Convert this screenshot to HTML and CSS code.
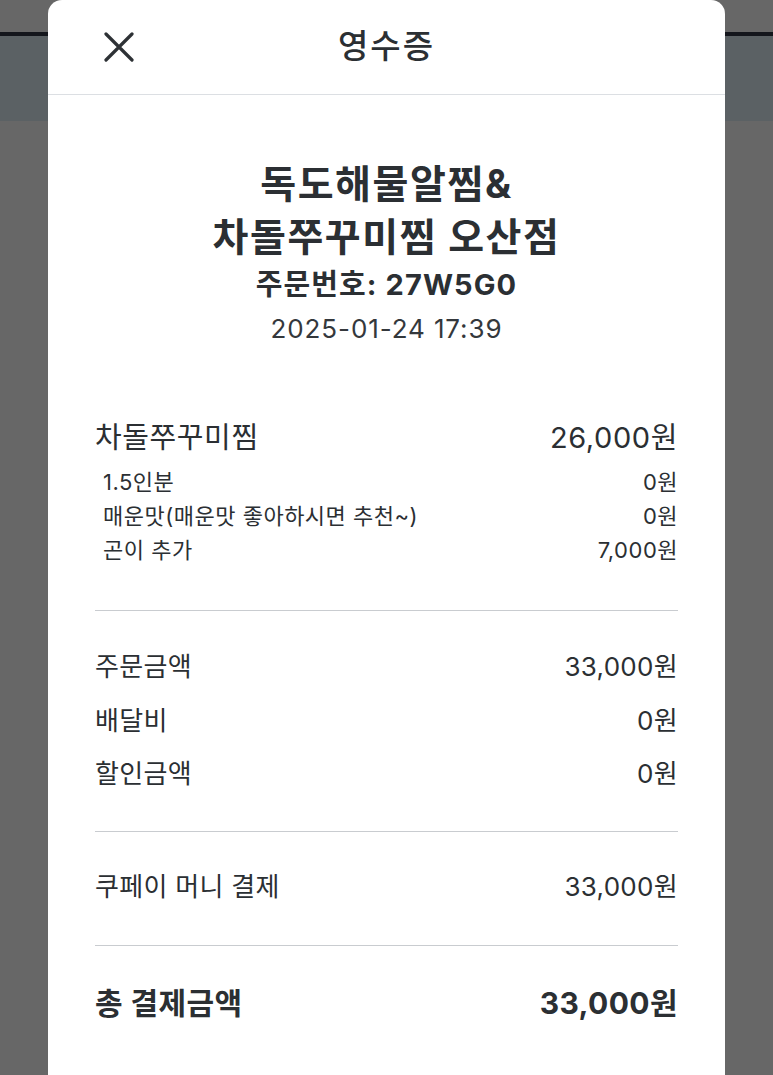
FILE: index.html
```html
<!DOCTYPE html>
<html lang="ko">
<head>
<meta charset="utf-8">
<link rel="stylesheet" href="styles.css">
</head>
<body>
<div class="page">
  <div class="topbar"></div>
  <div class="band"></div>
</div>
<div class="overlay">
  <div class="modal">
    <header class="modal-head">
      <button class="close" aria-label="닫기">
        <svg width="30" height="30" viewBox="0 0 30 30"><path d="M2 2 L28 28 M28 2 L2 28" stroke="#2d3135" stroke-width="3.2" stroke-linecap="round" fill="none"/></svg>
      </button>
      <h1 class="modal-title">영수증</h1>
    </header>
    <div class="modal-body">
      <section class="store">
        <h2 class="store-name">독도해물알찜&amp;<br>차돌쭈꾸미찜 오산점</h2>
        <p class="order-no">주문번호: 27W5G0</p>
        <p class="order-date">2025-01-24 17:39</p>
      </section>
      <section class="items">
        <div class="row row-main"><span>차돌쭈꾸미찜</span><span>26,000원</span></div>
        <div class="row row-sub"><span>1.5인분</span><span>0원</span></div>
        <div class="row row-sub"><span>매운맛(매운맛 좋아하시면 추천~)</span><span>0원</span></div>
        <div class="row row-sub"><span>곤이 추가</span><span>7,000원</span></div>
      </section>
      <section class="block sums">
        <div class="row row-std"><span>주문금액</span><span>33,000원</span></div>
        <div class="row row-std"><span>배달비</span><span>0원</span></div>
        <div class="row row-std"><span>할인금액</span><span>0원</span></div>
      </section>
      <section class="block pay">
        <div class="row row-std"><span>쿠페이 머니 결제</span><span>33,000원</span></div>
      </section>
      <section class="block total">
        <div class="row row-total"><span>총 결제금액</span><span>33,000원</span></div>
      </section>
    </div>
  </div>
</div>
</body>
</html>
```
FILE: styles.css
```css
* { box-sizing: border-box; }
html, body { margin: 0; padding: 0; }
body {
  width: 773px;
  height: 1075px;
  overflow: hidden;
  background: #676767;
  font-family: "Inter", "Noto Sans CJK KR", sans-serif;
  color: #2b2f33;
  position: relative;
}
.topbar {
  height: 36px;
  background: #676767;
  border-bottom: 4px solid #14161c;
}
.band {
  height: 85px;
  background: #5b6164;
}
.overlay {
  position: absolute;
  left: 48px;
  top: 0;
  width: 677px;
  height: 1075px;
}
.modal {
  background: #fff;
  border-radius: 14px 14px 0 0;
  height: 100%;
  display: flex;
  flex-direction: column;
}
.modal-head {
  height: 95px;
  border-bottom: 1.5px solid #dcdfe3;
  display: flex;
  align-items: center;
  justify-content: center;
  position: relative;
}
.close {
  position: absolute;
  left: 56px;
  top: 32px;
  padding: 0;
  border: 0;
  background: none;
  width: 30px;
  height: 30px;
}
.close svg { display: block; }
.modal-title {
  margin: 0;
  font-size: 33px;
  font-weight: 500;
  line-height: 1;
  letter-spacing: 2px;
  color: #2b2f33;
  transform: translateY(-1px);
}
.modal-body {
  padding: 0 47px 0 47px;
}
.store {
  text-align: center;
  padding-top: 62px;
}
.store-name {
  margin: 0;
  font-size: 39px;
  font-weight: 700;
  line-height: 53px;
  letter-spacing: 1.6px;
}
.order-no {
  margin: 2px 0 0;
  font-size: 29px;
  font-weight: 700;
  line-height: 40px;
  letter-spacing: 1.1px;
}
.order-date {
  margin: 6px 0 0;
  font-size: 26px;
  font-weight: 400;
  line-height: 36px;
  color: #34383c;
  letter-spacing: 0.9px;
}
.items {
  margin-top: 71px;
  padding-bottom: 43px;
}
.row {
  display: flex;
  justify-content: space-between;
  align-items: center;
}
.row-main {
  font-size: 29px;
  line-height: 40px;
  margin-bottom: 7px;
  letter-spacing: 0.6px;
}
.row-sub {
  font-size: 22px;
  line-height: 34px;
  padding-left: 8px;
  letter-spacing: 0.5px;
}
.block {
  border-top: 1.5px solid #c9ccd0;
}
.sums { padding: 29px 0 30px; }
.sums .row-std { height: 53.5px; }
.pay { padding: 28px 0 32px; }
.row-std {
  font-size: 26px;
  line-height: 53px;
  letter-spacing: 0.3px;
}
.total { padding: 32px 0; }
.row-total {
  font-size: 30px;
  font-weight: 700;
  line-height: 50px;
  letter-spacing: 0.4px;
}
```
